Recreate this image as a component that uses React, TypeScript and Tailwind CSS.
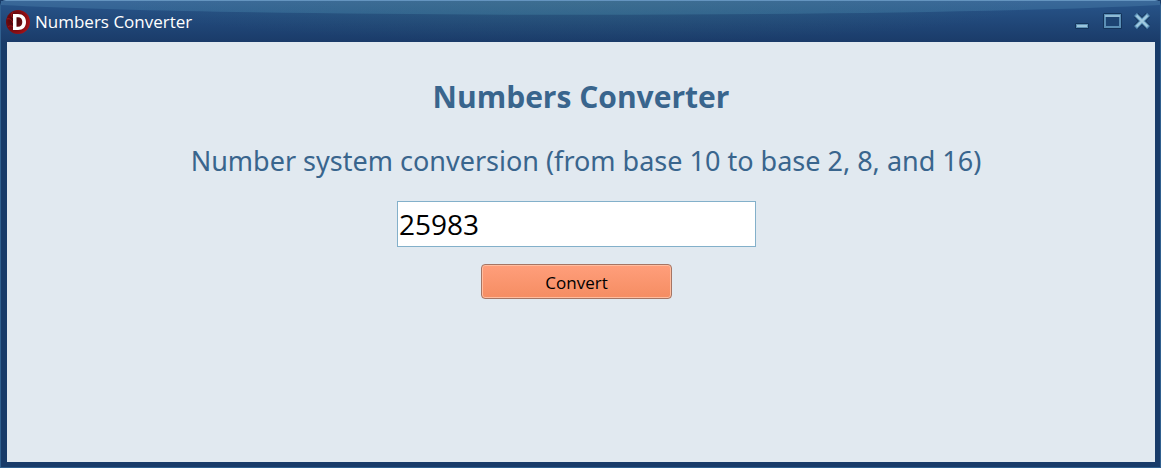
import { useState } from "react";

function AppLogo() {
  return (
    <svg width="24" height="24" viewBox="0 0 24 24" aria-hidden="true">
      <defs>
        <radialGradient id="logo" cx="35%" cy="45%" r="65%">
          <stop offset="0" stopColor="#3a0508" />
          <stop offset="0.6" stopColor="#760b10" />
          <stop offset="1" stopColor="#a81218" />
        </radialGradient>
      </defs>
      <circle cx="12" cy="12" r="12" fill="url(#logo)" />
      <path d="M1 9c3-1 5 1 6 4M2 17c2-2 5-1 6 1M7 2c-2 2-2 4 0 6" fill="none" stroke="#a3141a" strokeWidth="1" />
      <path
        fillRule="evenodd"
        fill="#fff"
        d="M7 4h5c5 0 8 3 8 8s-3 8-8 8H7zM10.500 7.200v9.600h1.500c2.800 0 4.300-1.700 4.300-4.800s-1.500-4.800-4.300-4.800z"
      />
    </svg>
  );
}

function TitleBar() {
  return (
    <header className="relative flex h-[41px] shrink-0 items-center justify-between overflow-hidden bg-linear-to-b from-[#28558a] to-[#1a3b69] px-[5px]">
      <svg className="absolute inset-0 h-4 w-full" viewBox="0 0 1161 16" preserveAspectRatio="none" aria-hidden="true">
        <defs>
          <linearGradient id="gloss" x1="0" y1="0" x2="0" y2="1">
            <stop offset="0" stopColor="#3a6899" />
            <stop offset="1" stopColor="#306291" />
          </linearGradient>
        </defs>
        <path d="M0 0H1161V4C900 17 260 17 0 4Z" fill="url(#gloss)" />
      </svg>
      <div className="absolute inset-0 bg-radial-[40%_100%_at_50%_0%] from-[#4a856f]/20 to-transparent" />
      <div className="relative flex items-center gap-[5px]">
        <AppLogo />
        <span className="text-[17px] leading-6 text-white">Numbers Converter</span>
      </div>
      <div className="relative flex items-center gap-2 pr-0.5">
        <button type="button" aria-label="Minimize" className="block">
          <svg width="22" height="20" viewBox="0 0 22 20" aria-hidden="true">
            <rect x="4" y="11" width="14" height="6" rx="1.500" fill="#14345a" />
            <rect x="5" y="12" width="12" height="4" fill="#5f92b5" />
            <rect x="6" y="13" width="10" height="2" fill="#9cc5dc" />
          </svg>
        </button>
        <button type="button" aria-label="Maximize" className="block">
          <svg width="22" height="20" viewBox="0 0 22 20" aria-hidden="true">
            <rect x="2" y="1" width="19" height="16" rx="1.500" fill="#14345a" />
            <rect x="3" y="2" width="17" height="14" fill="#5b8fb5" />
            <rect x="4" y="3" width="15" height="2" fill="#8fbad4" />
            <rect x="5" y="5" width="13" height="9" fill="#1d4473" />
          </svg>
        </button>
        <button type="button" aria-label="Close" className="block">
          <svg width="22" height="20" viewBox="0 0 22 20" aria-hidden="true">
            <path d="M5 3L17 15M17 3L5 15" stroke="#14345a" strokeWidth="6" />
            <path d="M4.500 2.500L17.500 15.500M17.500 2.500L4.500 15.500" stroke="#6197bd" strokeWidth="4" />
            <path d="M5.500 3.500L16.500 14.500M16.500 3.500L5.500 14.500" stroke="#a3cbe0" strokeWidth="2" />
          </svg>
        </button>
      </div>
    </header>
  );
}

export default function App() {
  const [value, setValue] = useState("25983");
  return (
    <div className="flex min-h-screen flex-col bg-[#183b69] font-['Open_Sans','Noto_Sans',sans-serif]">
      <div className="flex grow flex-col rounded-t-md border border-[#30608f] border-t-[#6494bf]">
        <TitleBar />
        <main className="mr-[5px] mb-[5px] ml-[6px] grow bg-[#e1e9f0] pt-8 text-center text-[#39658d]">
          <h1 className="text-[30px] leading-[46px] font-bold">Numbers Converter</h1>
          <form onSubmit={(event) => event.preventDefault()}>
            <label
              htmlFor="number"
              className="mt-5 block pl-[10px] font-['Noto_Sans',sans-serif] text-[27px] leading-[42px]"
            >
              Number system conversion (from base 10 to base 2, 8, and 16)
            </label>
            <div className="mt-[19px] flex flex-col items-center gap-[17px] pr-[9px]">
              <input
                id="number"
                type="text"
                value={value}
                onChange={(event) => setValue(event.target.value)}
                className="h-[46px] w-[359px] max-w-full border border-[#83b0ca] bg-white px-px text-[28px] text-black outline-none"
              />
              <button
                type="submit"
                className="h-[35px] w-[191px] rounded border border-[#a57564] bg-linear-to-b from-[#ff9e7b] to-[#f58d62] pt-0.5 text-[17px] text-black inset-ring inset-ring-[#ffbd9f]"
              >
                Convert
              </button>
            </div>
          </form>
        </main>
      </div>
    </div>
  );
}
